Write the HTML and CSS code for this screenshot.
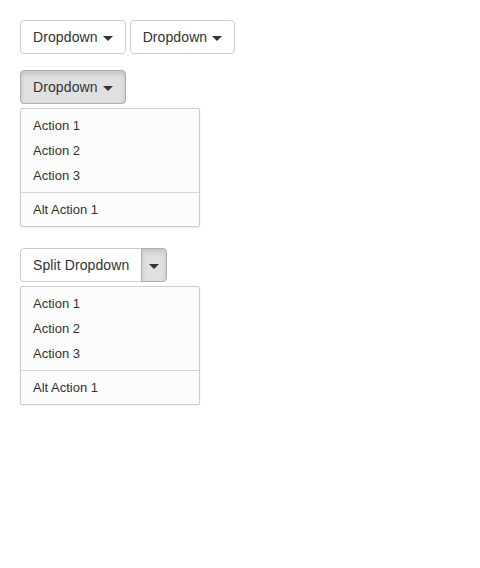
FILE: index.html
```html
<!DOCTYPE html>
<html>
<head>
<meta charset="utf-8">
<link rel="stylesheet" href="styles.css">
</head>
<body>
<div class="page">
  <div class="row">
    <button class="btn">Dropdown <span class="caret"></span></button>
    <button class="btn">Dropdown <span class="caret"></span></button>
  </div>
  <div class="group">
    <button class="btn active">Dropdown <span class="caret"></span></button>
    <ul class="menu">
      <li>Action 1</li>
      <li>Action 2</li>
      <li>Action 3</li>
      <li class="divider"></li>
      <li>Alt Action 1</li>
    </ul>
  </div>
  <div class="group split-group">
    <div class="split">
      <button class="btn split-main">Split Dropdown</button>
      <button class="btn split-toggle active"><span class="caret"></span></button>
    </div>
    <ul class="menu">
      <li>Action 1</li>
      <li>Action 2</li>
      <li>Action 3</li>
      <li class="divider"></li>
      <li>Alt Action 1</li>
    </ul>
  </div>
</div>
</body>
</html>
```
FILE: styles.css
```css
html, body {
  margin: 0;
  padding: 0;
  background: #fff;
}
.page {
  padding: 20px;
  font-family: "Liberation Sans", Arial, sans-serif;
  color: #333;
}
.row {
  display: flex;
  gap: 4px;
}
.btn {
  font-family: "Liberation Sans", Arial, sans-serif;
  font-size: 14px;
  letter-spacing: 0.1px;
  color: #333;
  background: #fff;
  border: 1px solid #ccc;
  border-radius: 4px;
  height: 34px;
  padding: 0 12px;
  display: inline-flex;
  align-items: center;
  gap: 5px;
  box-sizing: border-box;
  margin: 0;
}
.btn.active {
  background: #e0e0e0;
  border-color: #adadad;
  box-shadow: inset 0 3px 5px rgba(0,0,0,0.125);
}
.caret {
  display: inline-block;
  width: 0;
  height: 0;
  border-left: 5px solid transparent;
  border-right: 5px solid transparent;
  border-top: 5px solid #333;
  margin-top: 2px;
}
.group {
  margin-top: 16px;
  display: flex;
  flex-direction: column;
  align-items: flex-start;
}
.split-group {
  margin-top: 21px;
}
.split {
  display: flex;
}
.split-main {
  border-top-right-radius: 0;
  border-bottom-right-radius: 0;
}
.split-toggle {
  margin-left: -1px;
  padding: 0 7px;
  border-top-left-radius: 0;
  border-bottom-left-radius: 0;
}
.menu {
  list-style: none;
  margin: 4px 0 0;
  padding: 4px 0;
  width: 180px;
  box-sizing: border-box;
  background: #fcfcfc;
  border: 1px solid #ccc;
  border-radius: 2px;
  box-shadow: 0 1px 2px rgba(0,0,0,0.08);
  font-size: 13px;
  color: #333;
}
.menu li {
  height: 25px;
  line-height: 25px;
  padding: 0 12px;
}
.menu li.divider {
  height: 1px;
  margin: 4px 0;
  padding: 0;
  background: #d5d5d5;
}
```
